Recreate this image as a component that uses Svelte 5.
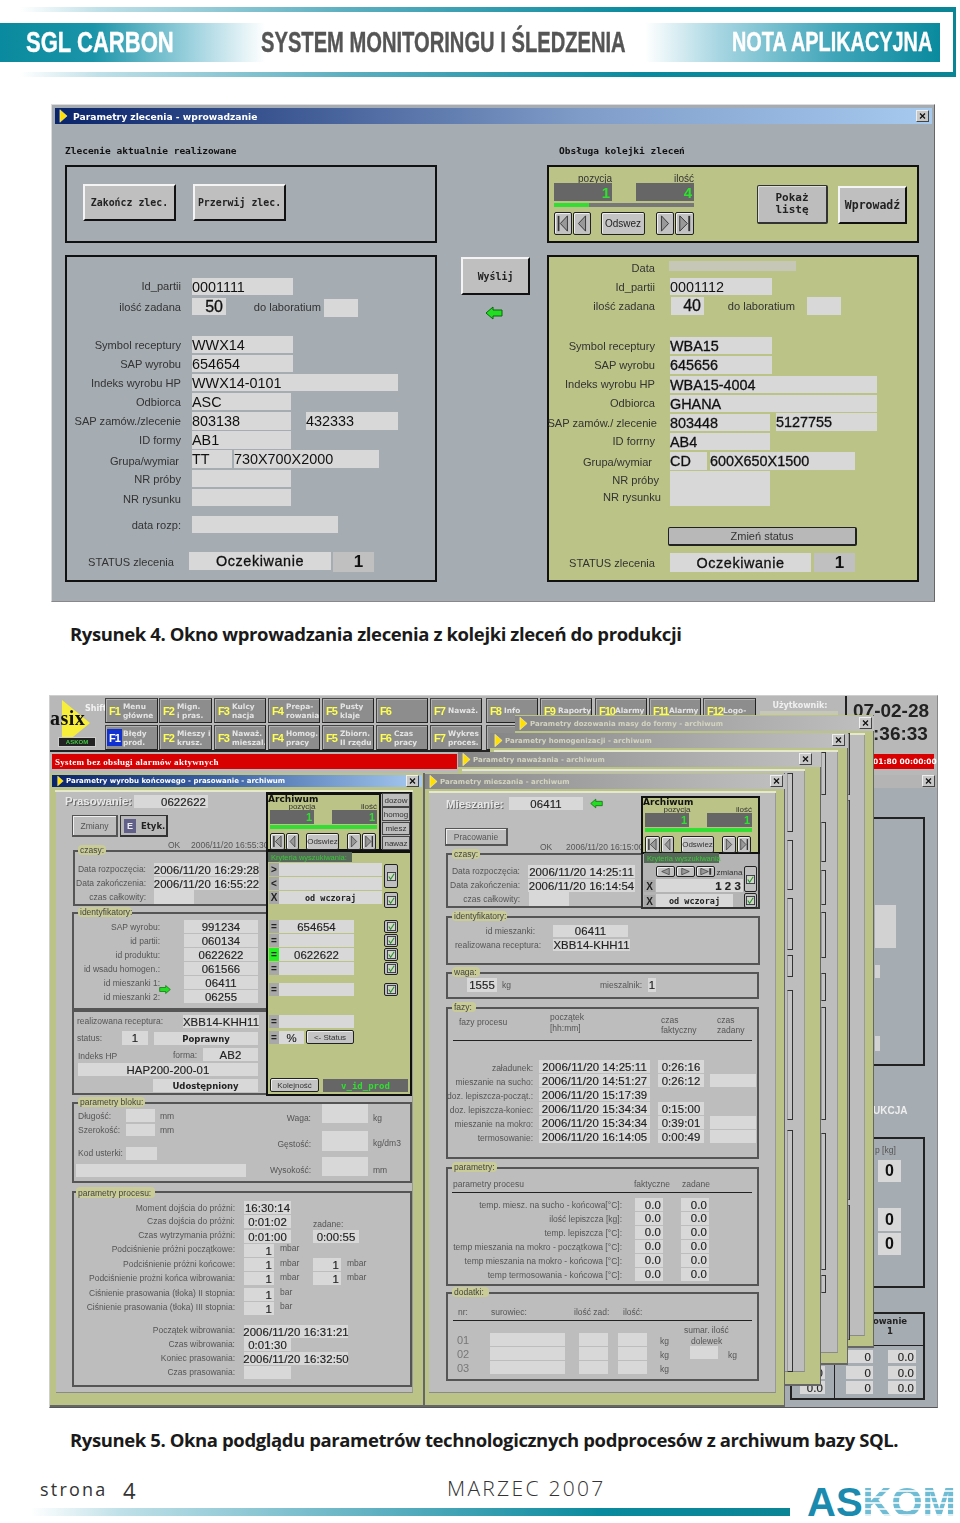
<script>
  const b = (cls, x1, y1, x2, y2, t = '', extra = {}) => ({ cls, x: x1, y: y1, w: x2 - x1, h: y2 - y1, t, ...extra });
  const lbl = (right, cy, t, cls = 'l12') => b(cls + ' r', right - 260, cy - 8, right, cy + 8, t);
  const txt = (x, cy, t, cls = 'l12') => b(cls, x, cy - 8, x + 220, cy + 8, t);
  const nav = (kind, x1, y1, x2, y2) => b('nav', x1, y1, x2, y2, '', { nav: kind });
  const tick = (x1, y1, x2, y2) => b('chk', x1, y1, x2, y2, '', { tick: true });
  const close = (cx, cy) => b('close', cx - 6, cy - 6, cx + 7, cy + 6, '', { x_: true });

  /* ---------- Figure 1 ---------- */
  const f14 = 'fld f14';
  const fig1 = [
    b('title1', 55, 108, 932, 124, 'Parametry zlecenia - wprowadzanie', { play: true }),
    close(922, 116),
    b('head', 65, 143, 300, 157, 'Zlecenie aktualnie realizowane'),
    b('head', 559, 143, 800, 157, 'Obsługa kolejki zleceń'),
    b('box', 65, 165, 437, 243),
    b('box', 65, 255, 437, 582),
    b('box ol', 547, 165, 919, 243),
    b('box ol', 547, 255, 919, 582),
    b('btn c', 83, 184, 176, 221, 'Zakończ zlec.'),
    b('btn c', 193, 184, 286, 221, 'Przerwij zlec.'),
    b('btn c', 461, 257, 530, 295, 'Wyślij'),
    b('arrow', 485, 306, 503, 320, '', { arrow: 'l' }),

    lbl(181, 286, 'Id_partii'), b(f14, 192, 278, 293, 295, '0001111'),
    lbl(181, 307, 'ilość zadana'), b(f14 + ' r pr2 f16m', 192, 298, 226, 315, '50'),
    lbl(321, 307, 'do laboratium'), b(f14, 324, 299, 358, 317),
    lbl(181, 345, 'Symbol receptury'), b(f14, 192, 336, 293, 353, 'WWX14'),
    lbl(181, 364, 'SAP wyrobu'), b(f14, 192, 355, 293, 372, '654654'),
    lbl(181, 383, 'Indeks wyrobu HP'), b(f14, 192, 374, 398, 391, 'WWX14-0101'),
    lbl(181, 402, 'Odbiorca'), b(f14, 192, 393, 291, 410, 'ASC'),
    lbl(181, 421, 'SAP zamów./zlecenie'), b(f14, 192, 412, 291, 430, '803138'), b(f14, 306, 412, 398, 430, '432333'),
    lbl(181, 440, 'ID formy'), b(f14, 192, 431, 291, 449, 'AB1'),
    lbl(179, 461, 'Grupa/wymiar'), b(f14, 192, 450, 232, 468, 'TT'), b(f14, 234, 450, 379, 468, '730X700X2000'),
    lbl(181, 479, 'NR próby'), b(f14, 192, 470, 291, 487),
    lbl(181, 499, 'NR rysunku'), b(f14, 192, 489, 291, 506),
    lbl(181, 525, 'data rozp:'), b(f14, 192, 516, 338, 533),
    lbl(174, 562, 'STATUS zlecenia'), b(f14 + ' c med wide', 189, 552, 331, 570, 'Oczekiwanie'),
    b('fld dk c f16', 333, 552, 374, 572, '1'),

    b('tiny c', 554, 172, 636, 184, 'pozycja'),
    b('tiny r', 636, 172, 694, 184, 'ilość'),
    b('dark bigg', 554, 183, 612, 201, '1'),
    b('dark bigg', 636, 183, 694, 201, '4'),
    b('pbar', 554, 203, 694, 207),
    b('pfill', 554, 203, 589, 207),
    nav('first', 554, 212, 572, 235),
    nav('prev', 573, 212, 591, 235),
    b('btn2 c', 601, 212, 645, 235, 'Odswez'),
    nav('next', 656, 212, 674, 235),
    nav('last', 675, 212, 694, 235),
    b('btn3 c ctr', 757, 185, 828, 224, 'Pokaż\nlistę'),
    b('btn c bigb', 838, 186, 907, 224, 'Wprowadź'),

    lbl(655, 268, 'Data'), b('fldd', 669, 261, 796, 271),
    lbl(655, 287, 'Id_partii'), b(f14, 670, 278, 772, 295, '0001112'),
    lbl(655, 306, 'ilość zadana'), b(f14 + ' r pr2 med f16m', 671, 297, 704, 315, '40'),
    lbl(795, 306, 'do laboratium'), b(f14, 807, 297, 841, 315),
    lbl(655, 346, 'Symbol receptury'), b(f14 + ' med', 670, 337, 772, 354, 'WBA15'),
    lbl(655, 365, 'SAP wyrobu'), b(f14 + ' med', 670, 356, 772, 374, '645656'),
    lbl(655, 384, 'Indeks wyrobu HP'), b(f14 + ' med', 670, 376, 877, 393, 'WBA15-4004'),
    lbl(655, 403, 'Odbiorca'), b(f14 + ' med', 670, 395, 877, 412, 'GHANA'),
    lbl(657, 423, 'SAP zamów./ zlecenie'), b(f14 + ' med', 670, 414, 770, 431, '803448'), b(f14 + ' med', 776, 413, 877, 431, '5127755'),
    lbl(655, 441, 'ID forrny'), b(f14 + ' med', 670, 433, 770, 450, 'AB4'),
    lbl(652, 462, 'Grupa/wymiar'), b(f14 + ' med', 670, 452, 707, 470, 'CD'), b(f14 + ' med', 710, 452, 855, 470, '600X650X1500'),
    lbl(659, 480, 'NR próby'), lbl(661, 497, 'NR rysunku'), b(f14, 670, 471, 770, 506),
    b('stbtn c', 668, 527, 857, 546, 'Zmień status'),
    lbl(655, 563, 'STATUS zlecenia'), b(f14 + ' c med wide', 670, 553, 811, 572, 'Oczekiwanie'),
    b('fld dk c f16', 814, 553, 855, 572, '1')
  ];

  /* ---------- Figure 2 ---------- */
  const xs = [[105,158],[159,212],[214,266],[268,320],[322,374],[376,428],[430,482],[486,538],[540,592],[595,647],[649,701],[703,756]];
  const r1 = [['F1','Menu\ngłówne'],['F2','Mign.\ni pras.'],['F3','Kulcy\nnacja'],['F4','Prepa-\nrowania'],['F5','Pusty\nklaje'],['F6',''],['F7','Naważ.'],['F8','Info'],['F9','Raporty'],['F10','Alarmy'],['F11','Alarmy'],['F12','Logo-']];
  const r2 = [['F1','Błędy\nprod.'],['F2','Mieszy i\nkrusz.'],['F3','Naważ.\nmieszal.'],['F4','Homog.\npracy'],['F5','Zbiorn.\nII rzędu'],['F6','Czas\npracy'],['F7','Wykres\nproces.'],['F8','']];
  const tb = [];
  r1.forEach((r, i) => tb.push(b('tb' + (i > 8 ? ' ten' : ''), xs[i][0], 698, xs[i][1], 723, r[1], { fk: r[0] })));
  r2.forEach((r, i) => tb.push(b('tb' + (i === 0 ? ' blue' : ''), xs[i][0], 725, xs[i][1], 750, r[1], { fk: r[0] })));

  const backWin = (x1, y1, x2, y2, titleY, paneRight, paneBottom, title) => [
    b('green', x1, y1, x2, y2),
    b('tg', x1, titleY, x2, titleY + 15, title, { play: true }),
    close(paneRight, titleY + 7),
    b('pale', x1 + 4, titleY + 17, paneRight, titleY + 19),
    b('pane', x1 + 4, titleY + 19, paneRight, paneBottom)
  ];
  const slats = (x1, x2, arr) => arr.map(([a, c]) => b('slat', x1, a, x2, c));

  const lab = (r, cy, t) => lbl(r, cy, t, 's');
  const tx = (x, cy, t) => txt(x, cy, t, 's');
  const v = (x1, y1, x2, y2, t = '', c = 'c') => b('fld v ' + c, x1, y1, x2, y2, t);

  const archive = (x0, y0, o) => [
    b('arch', x0, y0, x0 + o.w, y0 + 58),
    b('ah', x0 + 2, y0 + 1, x0 + 60, y0 + 11, 'Archiwum'),
    b('tiny2 c', x0 + 22, y0 + 8, x0 + 50, y0 + 18, 'pozycja'),
    b('tiny2 r', x0 + o.f2, y0 + 8, x0 + o.f2 + 45, y0 + 18, 'ilość'),
    b('dark big2', x0 + 4, y0 + 17, x0 + 48, y0 + 31, '1'),
    b('dark big2', x0 + o.f2, y0 + 17, x0 + o.f2 + 45, y0 + 31, '1'),
    b('pfill', x0 + 4, y0 + 32, x0 + o.f2 + 45, y0 + 36),
    nav('first', x0 + 4, y0 + 40, x0 + 19, y0 + 57),
    nav('prev', x0 + 20, y0 + 40, x0 + 33, y0 + 57),
    b('btn2 s7 c', x0 + 40, y0 + 40, x0 + 73, y0 + 57, 'Odswiez'),
    nav('next', x0 + 81, y0 + 40, x0 + 95, y0 + 57),
    nav('last', x0 + 96, y0 + 40, x0 + 110, y0 + 57)
  ];

  const fig2 = [
    /* toolbar */
    b('shift', 85, 703, 104, 713, 'Shift'),
    b('tri', 60, 700, 90, 746, '', { tri: true }),
    b('asix', 50, 708, 92, 728, 'asix'),
    b('askbadge c', 58, 737, 96, 747, 'ASKOM'),
    ...tb,
    b('hline', 50, 750, 846, 752),
    b('vline', 845, 696, 847, 755),
    b('usr c', 760, 700, 840, 710, 'Użytkownik:'),
    b('fldd', 760, 711, 838, 722),
    b('clock', 853, 700, 932, 722, '07-02-28'),
    b('clock', 873, 723, 932, 745, ':36:33'),
    b('redr', 873, 754, 934, 769, '01:80 00:00:00'),
    b('redb', 52, 754, 457, 769, 'System bez obsługi alarmów aktywnych'),

    /* far back window */
    b('bgwin', 425, 775, 937, 1407),
    b('tg2', 425, 775, 937, 788),
    close(928, 781),
    b('bx', 860, 817, 925, 1066),
    b('fldl', 875, 905, 896, 948),
    b('fldl', 875, 965, 880, 978),
    b('fldl', 875, 1036, 880, 1051),
    b('ukc', 873, 1102, 920, 1118, 'UKCJA'),
    b('bx', 860, 1137, 925, 1288),
    b('s', 875, 1143, 900, 1157, 'p [kg]'),
    b('fld big0 c', 878, 1160, 901, 1182, '0'),
    b('fld big0 c', 878, 1208, 901, 1231, '0'),
    b('fld big0 c', 878, 1233, 901, 1255, '0'),
    b('bx', 790, 1312, 925, 1400),
    b('bx2', 790, 1345, 925, 1400),
    b('sb c', 872, 1314, 908, 1338, 'owanie\n1'),
    b('vl', 834, 1345, 835, 1400),
    ...[1350, 1366, 1381].flatMap((y) => [
      v(800, y, 825, y + 13, '0.0', 'r'),
      v(846, y, 873, y + 13, '0', 'r'),
      v(888, y, 916, y + 13, '0.0', 'r')
    ]),

    /* stacked archive windows, back to front */
    ...backWin(515, 715, 874, 1348, 716, 865, 1336, 'Parametry dozowania masy do formy - archiwum'),
    ...slats(848, 850, [[733, 795], [800, 1200], [1205, 1340]]),
    ...backWin(490, 733, 848, 1365, 733, 838, 1353, 'Parametry homogenizacji - archiwum'),
    ...slats(821, 826, [[752, 795], [822, 862], [870, 905], [912, 958], [973, 1001], [1007, 1120], [1133, 1270], [1275, 1293]]),
    ...backWin(458, 752, 821, 1386, 752, 805, 1372, 'Parametry naważania - archiwum'),
    ...slats(787, 793, [[773, 832], [840, 890], [898, 950], [955, 977], [990, 1120], [1130, 1372]]),

    /* mieszanie window */
    b('dksep', 423, 773, 425, 1408),
    ...backWin(425, 773, 785, 1407, 774, 776, 1393, 'Parametry mieszania - archiwum'),
    b('emb', 446, 796, 505, 812, 'Mieszanie:'),
    v(509, 797, 583, 810, '06411'),
    b('arrow', 590, 798, 603, 809, '', { arrow: 'l' }),
    b('btn4 s c', 445, 828, 508, 846, 'Pracowanie'),
    tx(540, 847, 'OK'), tx(566, 847, '2006/11/20 16:15:00'),
    b('grp', 446, 853, 644, 908),
    b('gl', 452, 849, 480, 859, 'czasy:'),
    lab(520, 871, 'Data rozpoczęcia:'), v(528, 865, 635, 878, '2006/11/20 14:25:11'),
    lab(520, 885, 'Data zakończenia:'), v(528, 879, 635, 892, '2006/11/20 16:14:54'),
    lab(520, 899, 'czas całkowity:'), v(529, 892, 569, 906),
    ...archive(641, 796, { w: 119, f2: 66 }),
    b('panel', 641, 854, 760, 909),
    b('kr', 644, 853, 719, 863, 'Kryteria wyszukiwania'),
    nav('prev', 656, 866, 675, 877), nav('next', 676, 866, 695, 877), nav('last', 696, 866, 715, 877),
    b('s7 c', 716, 867, 743, 877, 'zmiana'),
    b('xt c', 644, 880, 655, 892, 'X'),
    b('fld v b12 r', 656, 879, 743, 892, '1 2 3'),
    tick(744, 866, 757, 892),
    b('xt c', 644, 895, 655, 907, 'X'),
    b('fld odw c', 656, 894, 733, 907, 'od wczoraj'),
    tick(744, 893, 757, 908),
    b('grp', 446, 916, 760, 965),
    b('gl', 452, 911, 507, 921, 'identyfikatory:'),
    lab(535, 931, 'id mieszanki:'), v(553, 925, 628, 937, '06411'),
    lab(541, 945, 'realizowana receptura:'), v(553, 939, 630, 951, 'XBB14-KHH11'),
    b('grp', 446, 972, 759, 999),
    b('gl', 452, 967, 480, 977, 'waga:'),
    v(467, 978, 497, 992, '1555'), tx(502, 985, 'kg'),
    lab(642, 985, 'mieszalnik:'), v(648, 978, 656, 992, '1'),
    b('grp', 446, 1007, 759, 1159),
    b('gl', 452, 1002, 476, 1012, 'fazy:'),
    tx(459, 1022, 'fazy procesu'), tx(550, 1017, 'początek'), tx(550, 1028, '[hh:mm]'),
    tx(661, 1020, 'czas'), tx(661, 1030, 'faktyczny'), tx(717, 1020, 'czas'), tx(717, 1030, 'zadany'),
    b('rule', 453, 1040, 752, 1041),
    ...[
      ['załadunek:', '2006/11/20 14:25:11', '0:26:16', 0],
      ['mieszanie na sucho:', '2006/11/20 14:51:27', '0:26:12', 1],
      ['doz. lepiszcza-począt.:', '2006/11/20 15:17:39', '', 0],
      ['doz. lepiszcza-koniec:', '2006/11/20 15:34:34', '0:15:00', 0],
      ['mieszanie na mokro:', '2006/11/20 15:34:34', '0:39:01', 1],
      ['termosowanie:', '2006/11/20 16:14:05', '0:00:49', 1]
    ].flatMap(([l, d, t, z], i) => {
      const y = 1060 + i * 14;
      const row = [lab(533, y + 8, l), v(539, y, 650, y + 13, d)];
      if (t) row.push(v(658, y, 704, y + 13, t, 'c'));
      if (z) row.push(v(710, y, 756, y + 13));
      return row;
    }),
    b('grp', 446, 1167, 759, 1286),
    b('gl', 452, 1162, 497, 1172, 'parametry:'),
    tx(453, 1184, 'parametry procesu'), tx(634, 1184, 'faktyczne'), tx(682, 1184, 'zadane'),
    b('rule', 452, 1192, 752, 1193),
    ...['temp. miesz. na sucho - końcowa[°C]:', 'ilość lepiszcza [kg]:', 'temp. lepiszcza [°C]:', 'temp mieszania na mokro - początkowa [°C]:', 'temp mieszania na mokro - końcowa [°C]:', 'temp termosowania - końcowa [°C]:'].flatMap((l, i) => {
      const y = 1198 + i * 13.9;
      return [lab(622, y + 7, l), v(635, y, 663, y + 13, '0.0', 'r'), v(681, y, 709, y + 13, '0.0', 'r')];
    }),
    b('grp', 446, 1292, 759, 1381),
    b('gl', 452, 1287, 489, 1297, 'dodatki:'),
    tx(458, 1312, 'nr:'), tx(491, 1312, 'surowiec:'), tx(574, 1312, 'ilość zad:'), tx(623, 1312, 'ilość:'),
    b('rule', 453, 1320, 752, 1321),
    ...[['01', 1333], ['02', 1347], ['03', 1361]].flatMap(([n, y]) => [
      b('nr', 457, y, 480, y + 14, n),
      v(490, y, 565, y + 13), v(579, y, 608, y + 13), v(618, y, 647, y + 13),
      tx(660, y + 8, 'kg')
    ]),
    tx(684, 1330, 'sumar. ilość'), tx(691, 1341, 'dolewek'),
    v(690, 1346, 718, 1359), tx(728, 1355, 'kg'),

    /* prasowanie window (active) */
    b('green', 50, 773, 424, 1407),
    b('title2', 52, 775, 422, 787, 'Parametry wyrobu końcowego - prasowanie - archiwum', { play: true }),
    close(412, 781),
    b('pale', 55, 790, 413, 792),
    b('pane', 56, 792, 413, 1393),
    b('emb', 65, 793, 130, 809, 'Prasowanie:'),
    b('fld v r pr2', 134, 795, 208, 808, '0622622'),
    b('btn4 s c', 72, 815, 118, 837, 'Zmiany'),
    b('btn5', 120, 815, 168, 837, 'Etyk.', { e: true }),
    tx(168, 845, 'OK'), tx(191, 845, '2006/11/20 16:55:30'),
    b('grp', 73, 850, 268, 906),
    b('gl', 78, 845, 106, 855, 'czasy:'),
    lab(146, 869, 'Data rozpoczęcia:'), v(154, 863, 259, 876, '2006/11/20 16:29:28'),
    lab(146, 883, 'Data zakończenia:'), v(154, 877, 259, 890, '2006/11/20 16:55:22'),
    lab(146, 897, 'czas całkowity:'), v(154, 890, 194, 904),
    b('grp', 72, 912, 268, 1010),
    b('gl', 78, 907, 132, 917, 'identyfikatory:'),
    ...[['SAP wyrobu:', '991234'], ['id partii:', '060134'], ['id produktu:', '0622622'], ['id wsadu homogen.:', '061566'], ['id mieszanki 1:', '06411'], ['id mieszanki 2:', '06255']].flatMap(([l, t], i) => {
      const y = 920 + i * 14;
      return [lab(160, y + 7, l), v(184, y, 258, y + 13, t)];
    }),
    b('arrow', 159, 984, 171, 995, '', { arrow: 'r' }),
    b('grp', 72, 1010, 268, 1095),
    tx(77, 1021, 'realizowana receptura:'),
    v(183, 1015, 259, 1028, 'XBB14-KHH11'),
    tx(77, 1038, 'status:'),
    v(122, 1031, 148, 1045, '1'),
    b('fld sb c', 154, 1032, 258, 1045, 'Poprawny'),
    tx(78, 1056, 'Indeks HP'), tx(173, 1055, 'forma:'),
    v(203, 1048, 258, 1061, 'AB2'),
    v(78, 1063, 258, 1076, 'HAP200-200-01'),
    b('fld sb c', 153, 1079, 258, 1092, 'Udostępniony'),
    b('grp', 72, 1102, 412, 1183),
    b('gl', 78, 1097, 145, 1107, 'parametry bloku:'),
    tx(78, 1116, 'Długość:'), v(126, 1109, 155, 1122), tx(160, 1116, 'mm'),
    tx(78, 1130, 'Szerokość:'), v(126, 1124, 155, 1136), tx(160, 1130, 'mm'),
    tx(78, 1153, 'Kod usterki:'), v(126, 1147, 157, 1160), v(76, 1164, 246, 1177),
    lab(311, 1118, 'Waga:'), v(322, 1104, 368, 1123), tx(373, 1118, 'kg'),
    lab(311, 1144, 'Gęstość:'), v(322, 1131, 368, 1151), tx(373, 1143, 'kg/dm3'),
    lab(311, 1170, 'Wysokość:'), v(322, 1157, 368, 1176), tx(373, 1170, 'mm'),
    b('grp', 72, 1191, 412, 1387),
    b('gl', 76, 1187, 155, 1198, 'parametry procesu:'),
    ...[
      [1208, 'Moment dojścia do próżni:', 1201, '16:30:14'],
      [1221, 'Czas dojścia do próżni:', 1215, '0:01:02'],
      [1235, 'Czas wytrzymania próżni:', 1230, '0:01:00']
    ].flatMap(([cy, l, y, t]) => [lab(235, cy, l), v(244, y, 291, y + 13, t)]),
    ...[
      [1249, 'Podciśnienie próżni początkowe:', 1244, 'mbar'],
      [1264, 'Podciśnienie próżni końcowe:', 1258, 'mbar'],
      [1278, 'Podciśnienie prożni końca wibrowania:', 1272, 'mbar'],
      [1293, 'Ciśnienie prasowania (tłoka) II stopnia:', 1288, 'bar'],
      [1307, 'Ciśnienie prasowania (tłoka) III stopnia:', 1302, 'bar']
    ].flatMap(([cy, l, y, u]) => [lab(235, cy, l), v(244, y, 274, y + 13, '1', 'r'), tx(280, cy - 1, u)]),
    tx(313, 1224, 'zadane:'), v(313, 1230, 359, 1243, '0:00:55'),
    v(313, 1258, 341, 1271, '1', 'r'), tx(347, 1263, 'mbar'),
    v(313, 1272, 341, 1285, '1', 'r'), tx(347, 1277, 'mbar'),
    lab(235, 1330, 'Początek wibrowania:'), v(244, 1325, 348, 1338, '2006/11/20 16:31:21'),
    lab(235, 1344, 'Czas wibrowania:'), v(244, 1338, 291, 1351, '0:01:30'),
    lab(235, 1358, 'Koniec prasowania:'), v(244, 1352, 348, 1365, '2006/11/20 16:32:50'),
    lab(235, 1372, 'Czas prasowania:'), v(244, 1366, 291, 1379),

    /* archive + criteria of prasowanie */
    b('ktop', 266, 851, 412, 1096),
    b('archo', 266, 792, 412, 851),
    ...[['dozow', 793, 807], ['homog', 807, 821], ['miesz', 822, 835], ['nawaz', 836, 850]].map(([t, a, c]) => b('tab s7 c', 382, a, 410, c, t)),
    ...archive(266, 793, { w: 115, f2: 66 }),
    b('kr', 268, 852, 352, 862, 'Kryteria wyszukiwania:'),
    b('xt c', 269, 863, 279, 876, '>'), b('fld', 279, 863, 382, 876),
    b('xt c', 269, 877, 279, 890, '<'), b('fld', 279, 877, 382, 890),
    b('xt c', 269, 891, 279, 904, 'X'), b('fld odw c', 279, 891, 382, 904, 'od wczoraj'),
    tick(384, 864, 398, 888), tick(384, 892, 398, 908),
    ...[[920, '654654', 0], [934, '', 0], [948, '0622622', 1], [962, '', 0], [983, '', 0], [1015, '', 0]].flatMap(([y, t, g]) => [
      b((g ? 'eqg' : 'xt') + ' c', 269, y, 279, y + 13, '='),
      v(279, y, 354, y + 13, t)
    ]),
    ...[920, 934, 948, 962, 983].map((y) => tick(384, y, 398, y + 13)),
    b('xt c', 269, 1031, 279, 1044, '='), v(279, 1031, 304, 1044, '%'),
    b('btn2 s7 c', 306, 1030, 354, 1044, '<- Status'),
    b('btn2 s7 c', 270, 1078, 319, 1092, 'Kolejność'),
    b('dark sid c', 323, 1079, 408, 1092, 'v_id_prod')
  ];
</script>

{#snippet icon(i)}
  {#if i.play}
    <svg class="play" viewBox="0 0 10 14"><polygon points="1,0 9,7 1,14" fill="#ffe000" stroke="#fff" stroke-width=".5" /></svg>
  {/if}
  {#if i.nav}
    <svg viewBox="0 0 18 22" preserveAspectRatio="none">
      {#if i.nav === 'first'}
        <rect x="3" y="3" width="2" height="16" fill="#333" /><polygon points="14,3 6,11 14,19" fill="#999" stroke="#333" />
      {:else if i.nav === 'prev'}
        <polygon points="13,3 5,11 13,19" fill="#999" stroke="#333" />
      {:else if i.nav === 'next'}
        <polygon points="5,3 13,11 5,19" fill="#999" stroke="#333" />
      {:else}
        <polygon points="4,3 12,11 4,19" fill="#999" stroke="#333" /><rect x="13" y="3" width="2" height="16" fill="#333" />
      {/if}
    </svg>
  {/if}
  {#if i.arrow}
    <svg viewBox="0 0 18 14">
      {#if i.arrow === 'l'}
        <polygon points="1,7 8,1 8,4 17,4 17,10 8,10 8,13" fill="#22dd22" stroke="#086808" />
      {:else}
        <polygon points="17,7 10,1 10,4 1,4 1,10 10,10 10,13" fill="#22dd22" stroke="#086808" />
      {/if}
    </svg>
  {/if}
  {#if i.tick}
    <svg viewBox="0 0 10 10" class="tk"><rect x=".5" y=".5" width="9" height="9" fill="#cfd8c0" stroke="#334" /><polyline points="2,5 4,8 8,2" fill="none" stroke="#2d8a3d" stroke-width="1.2" /></svg>
  {/if}
  {#if i.x_}
    <svg viewBox="0 0 13 12"><path d="M3.5 3 L9.5 9 M9.5 3 L3.5 9" stroke="#111" stroke-width="1.5" /></svg>
  {/if}
  {#if i.tri}
    <svg viewBox="0 0 30 46" preserveAspectRatio="none"><polygon points="2,0 30,23 2,46" fill="#f6ee3a" /></svg>
  {/if}
  {#if i.e}<span class="ebox">E</span>{/if}
  {#if i.fk}<span class="fk">{i.fk}</span>{/if}
{/snippet}

{#snippet canvas(items, ox, oy)}
  {#each items as i}
    <div class="it {i.cls}" style="left:{i.x - ox}px;top:{i.y - oy}px;width:{i.w}px;height:{i.h}px">
      {@render icon(i)}{#if i.t}<span class="tt">{i.t}</span>{/if}
    </div>
  {/each}
{/snippet}

<div class="page">
  <header class="hd">
    <div class="band bl"><span class="cond sgl">SGL CARBON</span></div>
    <div class="mid"><span class="cond sys">SYSTEM MONITORINGU I ŚLEDZENIA</span></div>
    <div class="band br"><span class="cond nota">NOTA APLIKACYJNA</span></div>
  </header>

  <section class="fig f1">{@render canvas(fig1, 51, 104)}</section>
  <p class="cap c1">Rysunek 4. Okno wprowadzania zlecenia z kolejki zleceń do produkcji</p>

  <section class="fig f2">{@render canvas(fig2, 49, 695)}</section>
  <p class="cap c2">Rysunek 5. Okna podglądu parametrów technologicznych podprocesów z archiwum bazy SQL.</p>

  <footer class="ft">
    <div class="ftl">
      <div class="ftrow">
        <span class="str">strona</span>
        <span class="num">4</span>
        <span class="mar">MARZEC 2007</span>
      </div>
      <div class="bar"></div>
    </div>
    <div class="logo"><span class="as">AS</span><span class="kom">KOM</span></div>
  </footer>
</div>

<style>
  :global(body) { margin: 0; background: #fff; }
  .page { width: 960px; height: 1523px; overflow: hidden; position: relative; background: #fff; font-family: "Liberation Sans", sans-serif; }

  /* header */
  .hd {
    display: flex; align-items: center; box-sizing: border-box;
    margin-top: 7px; height: 70px; padding-right: 20px;
    background:
      linear-gradient(90deg, #fff 20px, #bfe0e8 100px, #5aaebf 350px, #0a8a9e 640px, #0a8596) 0 0 / 956px 5px no-repeat,
      linear-gradient(90deg, #fff 20px, #bfe0e8 100px, #5aaebf 350px, #0a8a9e 640px, #0a8596) 0 100% / 956px 5px no-repeat,
      linear-gradient(#0a8596, #0a8596) 953px 0 / 3px 100% no-repeat;
  }
  .band { height: 39px; display: flex; align-items: center; overflow: visible; }
  .bl { width: 265px; padding-left: 26px; box-sizing: border-box; background: linear-gradient(90deg, #0a8a9e, #1a94a8 35%, #a7d6e2 75%, #fff); }
  .br { width: 295px; padding-left: 87px; box-sizing: border-box; background: linear-gradient(90deg, #fff, #a7d6e2 25%, #3ea4b8 65%, #0a8a9e); }
  .mid { width: 380px; flex: none; height: 39px; display: flex; align-items: center; margin-left: -4px; margin-right: 4px; }
  .cond { display: inline-block; font-weight: 700; white-space: nowrap; transform-origin: left center; font-family: "Liberation Sans", sans-serif; -webkit-text-stroke: .4px currentColor; }
  .sgl { color: #fff; font-size: 29px; transform: scaleX(.76); }
  .sys { color: #555; font-size: 29px; transform: scaleX(.695); }
  .nota { color: #fff; font-size: 28px; transform: scaleX(.71); }

  /* figures */
  .fig { position: relative; box-sizing: border-box; overflow: hidden; filter: blur(.35px); }
  .f1 { margin: 27px 0 0 51px; width: 884px; height: 498px; background: #a5acb2; border: 1px solid #dcdcdc; border-right-color: #666; border-bottom-color: #888; }
  .f2 { margin: 0 0 0 49px; width: 889px; height: 713px; background: #b8b8b8; border: 1px solid #cfcfcf; border-right-color: #888; border-bottom-color: #555; }

  .it { position: absolute; box-sizing: border-box; white-space: pre; display: flex; align-items: center; margin: -1px 0 0 -1px; }
  .it svg { width: 100%; height: 100%; display: block; }
  .r { justify-content: flex-end; }
  .c { justify-content: center; }
  .ctr { text-align: center; }
  .pr2 { padding-right: 3px; }

  /* captions */
  .cap { margin: 0; font-family: "Open Sans", sans-serif; font-weight: 700; color: #1a1a1a; padding-left: 70px; white-space: nowrap; height: 26px; line-height: 26px; }
  .c1 { font-size: 18.5px; letter-spacing: -.4px; margin-top: 19px; margin-bottom: 48px; }
  .c2 { font-size: 18.5px; letter-spacing: -.4px; margin-top: 19px; }

  /* footer */
  .ft { display: flex; margin-top: 19px; align-items: flex-end; }
  .ftl { width: 807px; flex: none; }
  .ftrow { display: flex; align-items: baseline; padding-left: 40px; height: 36px; }
  .str { font-family: "Open Sans", sans-serif; font-size: 18px; letter-spacing: 2.2px; color: #333; width: 83px; }
  .num { font-family: "Open Sans", sans-serif; font-size: 22px; color: #333; width: 324px; transform: translateY(3px); }
  .mar { font-family: "Open Sans", sans-serif; font-size: 21px; letter-spacing: 2.3px; color: #333; font-weight: 300; }
  .bar { margin: 0 0 7px 30px; width: 760px; height: 8px; background: linear-gradient(90deg, #fff, #bfe0e8 12%, #6fb8c8 40%, #0a8a9e 75%, #0a8596); }
  .logo { font-weight: 700; font-size: 40px; line-height: 30px; height: 30px; letter-spacing: 0; margin-bottom: 6px; white-space: nowrap; }
  .as { color: #1a8bae; }
  .kom { background: repeating-linear-gradient(180deg, #6fbcd4 0 4px, #dff0f5 4px 6px); -webkit-background-clip: text; background-clip: text; color: transparent; }

  /* ---- fig 1 ---- */
  .title1 { background: linear-gradient(90deg, #0a246a, #7f9cc8 60%, #a6caf0); color: #fff; font: 700 9.2px "DejaVu Sans", sans-serif; padding-left: 18px; }
  .title1 .play, .title2 .play, .tg .play { position: absolute; left: 4px; top: 1px; width: 9px; height: calc(100% - 2px); }
  .close { background: #c8c8c8; border: 1px solid; border-color: #eee #444 #444 #eee; }
  .head { font: 700 9.5px "DejaVu Sans Mono", monospace; color: #111; }
  .box { border: 2px solid #111; }
  .ol { background: #bcc386; }
  .btn { background: #bfbfbf; border: 2px solid; border-color: #f4f4f4 #111 #111 #f4f4f4; font: 700 9.9px "DejaVu Sans Mono", monospace; color: #222; }
  .bigb { font-size: 11.5px; }
  .btn2 { background: #c4c4c4; border: 1px solid #222; border-radius: 2px; box-shadow: inset 1px 1px 0 #eee; font: 10px "Liberation Sans", sans-serif; color: #222; }
  .btn3 { background: #bdbdbd; border: 1px solid #333; border-right-width: 2px; border-bottom-width: 2px; border-radius: 2px; box-shadow: inset 1px 1px 0 #ddd; font: 700 11px/12px "DejaVu Sans Mono", monospace; color: #222; }
  .stbtn { background: #b8b8b8; border: 1px solid #222; border-right-width: 2px; border-bottom-width: 2px; border-radius: 2px; font: 11px "Liberation Sans", sans-serif; color: #333; }
  .nav { background: #c2c2c2; border: 1px solid #222; border-radius: 2px; box-shadow: inset 1px 1px 0 #eee; }
  .l12 { font: 11.1px "Liberation Sans", sans-serif; color: #333; }
  .fld { background: #d8d8d8; }
  .fldd { background: #c6c7b6; }
  .f14 { font: 14.4px "Liberation Sans", sans-serif; color: #111; }
  .med { font-weight: 400; -webkit-text-stroke: .3px #111; }
  .wide { letter-spacing: .6px; }
  .f16m { font-size: 16px; -webkit-text-stroke: .3px #111; }
  .dk { background: #c0c0c0; }
  .f16 { font: 700 17px "Liberation Sans", sans-serif; color: #111; padding-left: 10px; }
  .tiny { font: 10px "Liberation Sans", sans-serif; color: #333; }
  .dark { background: #666; color: #2fe02f; justify-content: flex-end; padding-right: 2px; }
  .bigg { font: 700 15px "Liberation Sans", sans-serif; }
  .pbar { background: #777; }
  .pfill { background: #33dd33; }

  /* ---- fig 2 ---- */
  .shift { font: 700 8px "DejaVu Sans", sans-serif; color: #f2f2f2; }
  .asix { font: 700 20px "Liberation Serif", serif; color: #111; letter-spacing: .5px; }
  .askbadge { background: #222; border: 1px solid #ccc; color: #44c844; font: 700 6px "Liberation Sans", sans-serif; }
  .tb { background: #8d8d8d; border: 1px solid; border-color: #444 #222 #222 #444; box-shadow: inset 1px 1px 0 #b0b0b0; padding-left: 17px; font: 700 7.4px/9px "DejaVu Sans", sans-serif; color: #e4e4e4; overflow: hidden; }
  .ten { padding-left: 19px; }
  .fk { position: absolute; left: 1px; top: 3px; bottom: 3px; display: flex; align-items: center; color: #ffff50; font: 700 11px "Liberation Sans", sans-serif; letter-spacing: -1px; padding: 0 2px; }
  .blue { background: #8d8d8d; }
  .blue .fk { background: #1030d0; color: #fff; }
  .hline, .vline { background: #222; }
  .usr { font: 700 8px "DejaVu Sans", sans-serif; color: #f0f0f0; }
  .clock { font: 700 19px "Liberation Sans", sans-serif; color: #222; }
  .redb { background: #d80000; color: #fff; font: 700 9px "Liberation Serif", serif; padding-left: 3px; letter-spacing: .3px; }
  .redr { background: #d80000; color: #fff; font: 700 7.5px "DejaVu Sans", sans-serif; }
  .bgwin { background: #a5acb2; }
  .tg2 { background: #b4b4b4; }
  .bx { border: 2px solid #222; }
  .bx2 { border-top: 1px solid #222; }
  .vl { background: #222; }
  .fldl { background: #d2d2d2; }
  .ukc { font: 700 10px "Liberation Sans", sans-serif; color: #eee; }
  .big0 { font: 700 16px "Liberation Sans", sans-serif; color: #111; }
  .green { background: #bcc386; border-bottom: 2px solid #666; border-right: 1px solid #666; }
  .tg { background: linear-gradient(90deg, #868686, #b0b0b0 70%, #c0c0c0); color: #d4d4c0; font: 700 7px "DejaVu Sans", sans-serif; padding-left: 15px; }
  .pale { background: #e6e8cc; }
  .pane { background: #bdbdbd; border-right: 1px solid #999; border-bottom: 1px solid #8a8a8a; }
  .slat { background: #c4c4c4; border: 1px solid #333; border-left-color: #999; }
  .dksep { background: #666; }
  .emb { font: 700 11.4px "Liberation Sans", sans-serif; color: #e8e8e8; text-shadow: 1px 1px 0 #666; }
  .title2 { background: linear-gradient(90deg, #0a246a, #3c62a4 45%, #a6caf0); color: #fff; font: 700 7px "DejaVu Sans", sans-serif; padding-left: 14px; }
  .s { font: 8.5px "Liberation Sans", sans-serif; color: #555; }
  .sb { font: 700 8.5px "DejaVu Sans", sans-serif; color: #222; text-align: center; }
  .v { font: 11.4px "Liberation Sans", sans-serif; color: #222; letter-spacing: .1px; -webkit-text-stroke: .15px #222; }
  .v.r { padding-right: 2px; }
  .b12 { font-weight: 700; padding-right: 3px; }
  .grp { border: 2px solid #555; }
  .gl { background: #c9cc96; border-radius: 4px; font: 8.5px "Liberation Sans", sans-serif; color: #444; padding: 0 2px; }
  .rule { background: #222; }
  .nr { font: 11px "Liberation Sans", sans-serif; color: #777; }
  .btn4 { background: #bdbdbd; border: 1px solid #555; border-right-width: 2px; border-bottom-width: 2px; box-shadow: inset 1px 1px 0 #eee; }
  .btn5 { background: #b8b8b8; border: 1px solid #333; border-right-width: 2px; border-bottom-width: 2px; padding-left: 20px; font: 700 8.5px "DejaVu Sans", sans-serif; color: #222; }
  .ebox { position: absolute; left: 3px; top: 3px; width: 12px; height: 14px; background: #606088; color: #eee; font: 700 9px "Liberation Sans", sans-serif; display: flex; align-items: center; justify-content: center; }
  .s7 { font: 8px "Liberation Sans", sans-serif; color: #333; }
  .arch { background: #bcc386; border: 2px solid #111; }
  .archo { background: #b0b0b0; border: 2px solid #111; }
  .ah { font: 700 9px "DejaVu Sans", sans-serif; color: #111; }
  .tiny2 { font: 8px "Liberation Sans", sans-serif; color: #333; }
  .big2 { font: 700 11px "Liberation Sans", sans-serif; }
  .panel { background: #b4b4b4; border: 2px solid #333; border-top: 0; }
  .kr { background: #586858; color: #39c639; font: 7.5px "Liberation Sans", sans-serif; padding-left: 3px; }
  .xt { background: #a8a8a8; font: 700 10px "Liberation Sans", sans-serif; color: #222; }
  .eqg { background: #22ee22; font: 700 10px "Liberation Sans", sans-serif; color: #222; }
  .chk { background: #bfbfbf; border: 1px solid #222; border-radius: 2px; justify-content: center; }
  .chk .tk { width: 9px; height: 9px; }
  .odw { font: 700 8.5px "DejaVu Sans Mono", monospace; color: #222; }
  .ktop { background: #bcc386; border: 2px solid #111; }
  .tab { background: #bdbdbd; border: 1px solid #444; }
  .sid { font: 700 9px "DejaVu Sans Mono", monospace; padding: 0; justify-content: center; }
</style>
